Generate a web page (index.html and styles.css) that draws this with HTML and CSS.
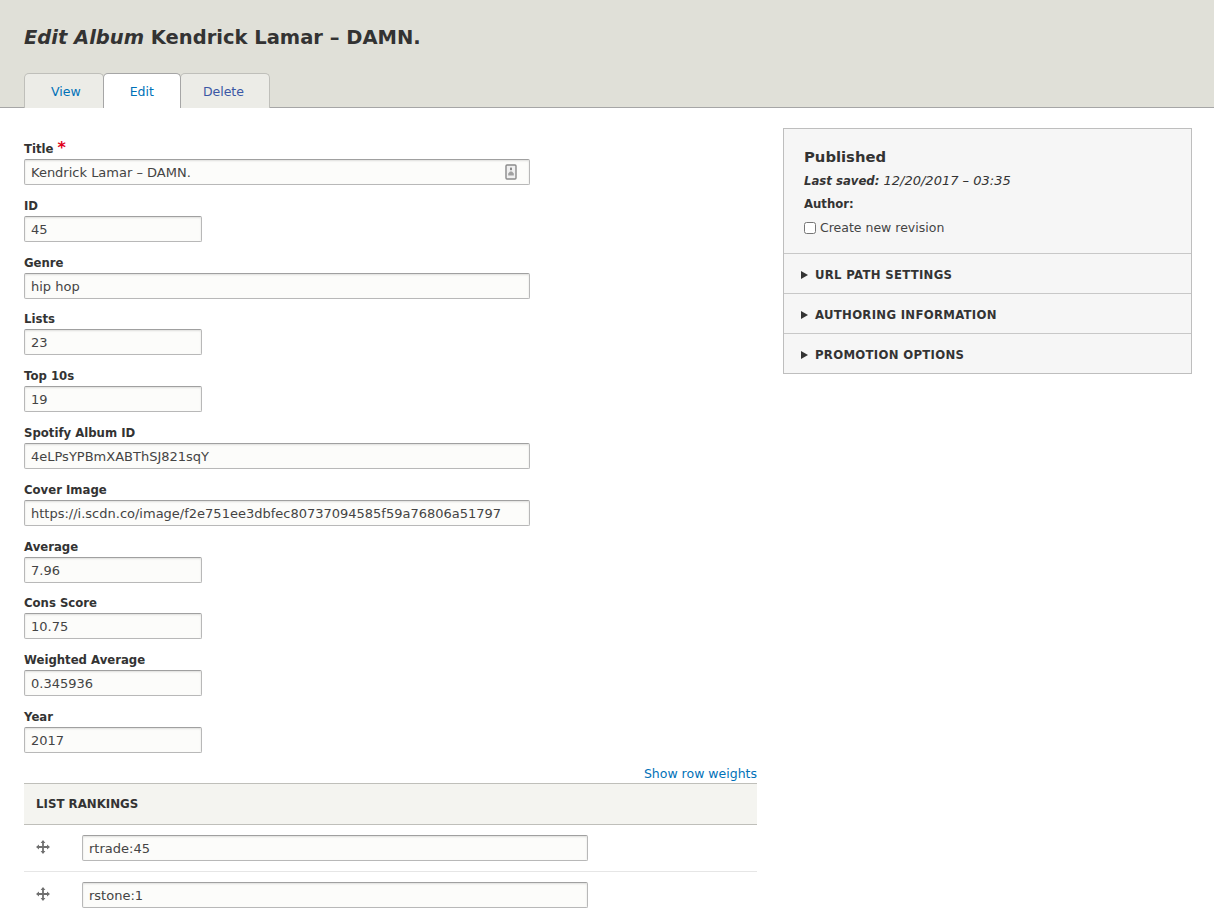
FILE: index.html
```html
<!DOCTYPE html>
<html lang="en">
<head>
    <meta charset="UTF-8">
    <meta name="viewport" content="width=device-width, initial-scale=1.0">
    <title>Edit Album</title>
    <link rel="stylesheet" href="styles.css">
</head>
<body>
    <header class="page-head">
        <h1><em>Edit Album</em> Kendrick Lamar – DAMN.</h1>
        <nav class="tabs">
            <a href="#" class="tab tab-view">View</a>
            <a href="#" class="tab tab-edit active">Edit</a>
            <a href="#" class="tab tab-delete">Delete</a>
        </nav>
    </header>

    <div class="layout">
        <form class="main">
            <div class="field">
                <label for="title">Title <span class="req">*</span></label>
                <div class="input-wrap">
                    <input class="long" type="text" id="title" value="Kendrick Lamar – DAMN.">
                    <svg class="contact-icon" width="12" height="16" viewBox="0 0 12 16">
                        <rect x="1" y="1" width="10" height="14" rx="1" fill="#f0f0f0" stroke="#8a8a8a" stroke-width="1.4"/>
                        <rect x="5" y="3.6" width="2" height="2.6" fill="#8a8a8a"/>
                        <path d="M3.2 11.6 V9.4 L5 7.4 H7 L8.8 9.4 V11.6 Z" fill="#a0a0a0"/>
                    </svg>
                </div>
            </div>
            <div class="field">
                <label for="albumId">ID</label>
                <input class="short" type="text" id="albumId" value="45">
            </div>
            <div class="field">
                <label for="genre">Genre</label>
                <input class="long" type="text" id="genre" value="hip hop">
            </div>
            <div class="field">
                <label for="lists">Lists</label>
                <input class="short" type="text" id="lists" value="23">
            </div>
            <div class="field">
                <label for="top10s">Top 10s</label>
                <input class="short" type="text" id="top10s" value="19">
            </div>
            <div class="field">
                <label for="spotify">Spotify Album ID</label>
                <input class="long" type="text" id="spotify" value="4eLPsYPBmXABThSJ821sqY">
            </div>
            <div class="field">
                <label for="cover">Cover Image</label>
                <input class="long" type="text" id="cover" value="https://i.scdn.co/image/f2e751ee3dbfec80737094585f59a76806a51797">
            </div>
            <div class="field">
                <label for="average">Average</label>
                <input class="short" type="text" id="average" value="7.96">
            </div>
            <div class="field">
                <label for="cons">Cons Score</label>
                <input class="short" type="text" id="cons" value="10.75">
            </div>
            <div class="field">
                <label for="weighted">Weighted Average</label>
                <input class="short" type="text" id="weighted" value="0.345936">
            </div>
            <div class="field">
                <label for="year">Year</label>
                <input class="short" type="text" id="year" value="2017">
            </div>

            <div class="weights"><a href="#">Show row weights</a></div>
            <div class="table-head">LIST RANKINGS</div>
            <div class="row">
                <svg class="drag" width="14" height="14" viewBox="0 0 14 14"><use href="#move"/></svg>
                <input class="rank" type="text" value="rtrade:45">
            </div>
            <div class="row">
                <svg class="drag" width="14" height="14" viewBox="0 0 14 14"><use href="#move"/></svg>
                <input class="rank" type="text" value="rstone:1">
            </div>
        </form>

        <aside class="side">
            <div class="meta">
                <h3>Published</h3>
                <p class="saved"><b>Last saved:</b> 12/20/2017 – 03:35</p>
                <p class="author">Author:</p>
                <label class="check"><input type="checkbox"> Create new revision</label>
            </div>
            <div class="section"><span class="arrow"></span>URL PATH SETTINGS</div>
            <div class="section"><span class="arrow"></span>AUTHORING INFORMATION</div>
            <div class="section"><span class="arrow"></span>PROMOTION OPTIONS</div>
        </aside>
    </div>

    <svg width="0" height="0" class="defs">
        <symbol id="move" viewBox="0 0 14 14">
            <path d="M7 1 V13 M1 7 H13" stroke="#707070" stroke-width="1.8" fill="none"/>
            <path d="M7 0 L9.4 3 H4.6 Z M7 14 L9.4 11 H4.6 Z M0 7 L3 4.6 V9.4 Z M14 7 L11 4.6 V9.4 Z" fill="#707070"/>
        </symbol>
    </svg>
</body>
</html>
```

FILE: styles.css
```css
body {
    font-family: "DejaVu Sans", sans-serif;
    font-size: 12.5px;
    color: #333;
    margin: 0;
    padding: 0;
    background-color: #fff;
}

a {
    color: #0071b8;
    text-decoration: none;
}

.page-head {
    height: 107px;
    padding: 0 24px;
    background-color: #e0e0d8;
    border-bottom: 1px solid #a6a6a6;
    display: flex;
    flex-direction: column;
    justify-content: space-between;
}

.page-head h1 {
    margin: 0;
    padding-top: 24px;
    font-size: 19.5px;
    line-height: 28px;
    font-weight: 600;
    color: #333;
}

.tabs {
    display: flex;
    height: 34px;
}

.tab {
    box-sizing: border-box;
    height: 35px;
    padding-top: 10px;
    line-height: 16px;
    background-color: #ecece7;
    border: 1px solid #bfbfba;
    border-bottom: none;
    border-radius: 5px 5px 0 0;
    margin-right: -1px;
}

.tab-view {
    padding-left: 26px;
    padding-right: 22px;
}

.tab-edit {
    padding-left: 26px;
    padding-right: 26px;
}

.tab-delete {
    padding-left: 22px;
    padding-right: 25px;
    color: #3a57a5;
}

.tab.active {
    background-color: #fff;
    border-color: #a6a6a6;
    position: relative;
    z-index: 1;
}

.layout {
    display: flex;
    padding: 20px 22px 0 24px;
    gap: 26px;
}

.main {
    width: 733px;
    flex: none;
    padding-top: 12px;
}

.side {
    flex: 1;
    align-self: flex-start;
    background-color: #f6f6f6;
    border: 1px solid #bebebe;
}

.field {
    height: 56.8px;
}

.field label {
    display: block;
    padding-top: 1px;
    margin-bottom: 2px;
    font-size: 11.7px;
    font-weight: 600;
    line-height: 16px;
    color: #333;
}

.req {
    color: #e0001a;
    font-size: 16px;
    line-height: 10px;
}

input[type="text"] {
    box-sizing: border-box;
    height: 26px;
    padding: 1px 6px 0;
    font-family: "DejaVu Sans", sans-serif;
    font-size: 13px;
    color: #444;
    background-color: #fcfcfa;
    border: 1px solid #b8b8b8;
    border-top-color: #a0a0a0;
    border-radius: 2px;
    box-shadow: inset 0 1px 2px rgba(0, 0, 0, 0.12);
}

input.long {
    width: 506px;
}

input.short {
    width: 178px;
}

input.rank {
    width: 506px;
}

.input-wrap {
    position: relative;
    width: 506px;
}

.contact-icon {
    position: absolute;
    right: 13px;
    top: 5px;
}

.weights {
    text-align: right;
    line-height: 16px;
    margin-top: 1px;
    padding-bottom: 1px;
}

.table-head {
    height: 40px;
    line-height: 41px;
    padding-left: 12px;
    font-weight: 600;
    font-size: 11.8px;
    background-color: #f4f4f0;
    border-top: 1px solid #bfbfba;
    border-bottom: 1px solid #bfbfba;
}

.row {
    display: flex;
    align-items: center;
    height: 46px;
    border-bottom: 1px solid #e6e6e6;
}

.drag {
    margin-left: 12px;
    margin-right: 32px;
    margin-top: -1px;
}

.defs {
    position: absolute;
}

.meta {
    padding: 18px 20px 17px;
}

.meta h3 {
    margin: 0 0 6px;
    font-size: 14.8px;
    line-height: 20px;
    font-weight: 600;
}

.meta p {
    margin: 0 0 8px;
    line-height: 16px;
}

.meta p.saved {
    margin-bottom: 7px;
    font-style: italic;
    font-size: 13px;
}

.saved b {
    font-size: 11.7px;
}

.author {
    font-weight: 600;
    font-size: 11.7px;
}

.check {
    display: flex;
    align-items: center;
    line-height: 16px;
    color: #444;
}

.check input {
    margin: 0 4px 0 0;
    width: 12px;
    height: 12px;
}

.section {
    height: 37px;
    padding-top: 2px;
    padding-left: 17px;
    line-height: 39px;
    border-top: 1px solid #c8c8c8;
    font-weight: 600;
    font-size: 11.7px;
    letter-spacing: 0.3px;
}

.arrow {
    display: inline-block;
    width: 0;
    height: 0;
    border-left: 7px solid #333;
    border-top: 4px solid transparent;
    border-bottom: 4px solid transparent;
    margin-right: 7px;
}
```
